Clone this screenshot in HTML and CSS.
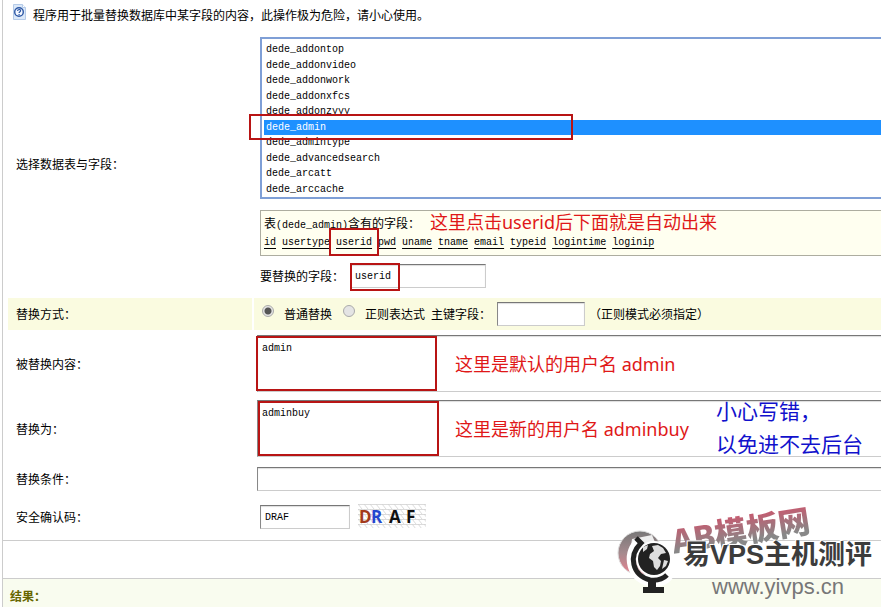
FILE: index.html
```
<!DOCTYPE html>
<html lang="zh-CN">
<head>
    <meta charset="UTF-8">
    <meta name="viewport" content="width=device-width, initial-scale=1.0">
    <title>数据库内容替换</title>
    <link rel="stylesheet" href="styles.css">
</head>
<body>

<div class="page">
    <form class="sheet">
        <div class="tip">
            <svg class="tip-icon" width="13" height="16" viewBox="0 0 13 16">
                <path d="M.5.5h9l3 3v12H.5z" fill="#dbe8f8" stroke="#b5cbe8"/>
                <path d="M9.500.5v3h3" fill="#fff" stroke="#b5cbe8"/>
                <circle cx="6" cy="8" r="4.300" fill="#f4f8ff" stroke="#2c57a5" stroke-width="1.400"/>
                <path d="M4.600 7c0-2 3-2 3-.2 0 1-1.500 1-1.500 2.200M6.100 10v1" fill="none" stroke="#2c57a5" stroke-width="1.200"/>
            </svg>
            <span>程序用于批量替换数据库中某字段的内容，此操作极为危险，请小心使用。</span>
        </div>

        <div class="row row-table">
            <label class="name" for="exptable">选择数据表与字段：</label>
            <div class="value">
                <select id="exptable" class="tables" size="10">
                    <option>dede_addonspec</option>
                    <option>dede_addontop</option>
                    <option>dede_addonvideo</option>
                    <option>dede_addonwork</option>
                    <option>dede_addonxfcs</option>
                    <option>dede_addonzyyy</option>
                    <option selected>dede_admin</option>
                    <option>dede_admintype</option>
                    <option>dede_advancedsearch</option>
                    <option>dede_arcatt</option>
                    <option>dede_arccache</option>
                </select>
                <div class="fields">
                    <p>表<code>(dede_admin)</code>含有的字段：</p>
                    <p class="links">
                        <a href="#">id</a>
                        <a href="#">usertype</a>
                        <a href="#">userid</a>
                        <a href="#">pwd</a>
                        <a href="#">uname</a>
                        <a href="#">tname</a>
                        <a href="#">email</a>
                        <a href="#">typeid</a>
                        <a href="#">logintime</a>
                        <a href="#">loginip</a>
                    </p>
                    <span class="mark mark-link"></span>
                    <span class="note note-link">这里点击userid后下面就是自动出来</span>
                </div>
                <div class="line">
                    <label class="field-label" for="rpfield">要替换的字段：</label>
                    <input type="text" id="rpfield" class="text-field" value="userid">
                    <span class="mark mark-field"></span>
                </div>
                <span class="mark mark-option"></span>
            </div>
        </div>

        <div class="row row-shaded">
            <span class="name">替换方式：</span>
            <div class="value modes">
                <input type="radio" id="mode1" name="rptype" checked>
                <label for="mode1">普通替换</label>
                <input type="radio" id="mode2" name="rptype">
                <label for="mode2">正则表达式</label>
                <label class="key-label" for="keyfield">主键字段：</label>
                <input type="text" id="keyfield" class="text-key">
                <span>（正则模式必须指定）</span>
            </div>
        </div>

        <div class="row">
            <label class="name" for="rpstring">被替换内容：</label>
            <div class="value value-area">
                <textarea id="rpstring">admin</textarea>
                <span class="mark mark-from"></span>
                <span class="note note-area">这里是默认的用户名 admin</span>
            </div>
        </div>

        <div class="row">
            <label class="name" for="tostring">替换为：</label>
            <div class="value value-area">
                <textarea id="tostring">adminbuy</textarea>
                <span class="mark mark-to"></span>
                <span class="note note-area">这里是新的用户名 adminbuy</span>
                <span class="note note-blue">小心写错，<br>以免进不去后台</span>
            </div>
        </div>

        <div class="row">
            <label class="name" for="condition">替换条件：</label>
            <div class="value value-input">
                <input type="text" id="condition" class="text-full">
            </div>
        </div>

        <div class="row">
            <label class="name" for="validate">安全确认码：</label>
            <div class="value value-code">
                <input type="text" id="validate" class="text-code" value="DRAF">
                <svg class="captcha" width="68" height="26" viewBox="0 0 68 26">
                    <defs>
                        <pattern id="mesh" width="6" height="5" patternUnits="userSpaceOnUse">
                            <path d="M0 .5h6M0 0l4 5" fill="none" stroke="#d2d2d2" stroke-width=".8"/>
                        </pattern>
                    </defs>
                    <rect width="68" height="24" fill="url(#mesh)"/>
                    <text x="1" y="19" fill="#a33a1c">D</text>
                    <text x="13" y="19" fill="#2447cf">R</text>
                    <text x="31" y="19" fill="#111">A</text>
                    <text x="48" y="19" fill="#111">F</text>
                </svg>
            </div>
        </div>
    </form>

    <div class="actions"></div>
    <div class="result">结果：</div>

    <div class="watermark">
        <svg class="badge" width="60" height="66" viewBox="0 0 60 66">
            <defs>
                <linearGradient id="disc" x1="0" y1="0" x2="0" y2="1">
                    <stop offset="0" stop-color="#777"/>
                    <stop offset=".5" stop-color="#a58a8e"/>
                    <stop offset="1" stop-color="#e8808e"/>
                </linearGradient>
            </defs>
            <circle cx="23" cy="24" r="22" fill="url(#disc)" stroke="#ddd"/>
            <path d="M15 10l20-4 5 12-16 10-11-4z" fill="#eee"/>
            <path d="M21 13C9 27 13 49 34 53c8 1 14-1 18-6" fill="none" stroke="#fff" stroke-width="9"/>
            <circle cx="37" cy="30" r="18" fill="#fff"/>
            <path d="M19 9l5 5C11 27 15 46 33 51c8 1 13-1 17-5" fill="none" stroke="#222" stroke-width="5"/>
            <circle cx="37" cy="30" r="16" fill="#222"/>
            <path d="M35 17l6-1 5 3 3 5-5 1-3 4 3 3-1 5-3 4-3-3-1-6-4-3 1-4 4-3zM26 18l5-2-1 4-4 3zM47 31l4 1-2 5-4 3z" fill="#ddd"/>
            <path d="M31 51h8v7h8v6H26v-6h5z" fill="#222"/>
        </svg>
        <span class="brand-back">AB模板网</span>
        <span class="brand">易VPS主机测评</span>
        <span class="site">www.yivps.cn</span>
    </div>
</div>

<script>
    // keep the selected table in the middle of the list
    document.getElementById('exptable').scrollTop = 13;
</script>
</body>
</html>
```
FILE: styles.css
```
* {
    box-sizing: border-box;
}

body {
    margin: 0;
    background-color: #fff;
    color: #000;
    font-family: "Noto Sans CJK SC", sans-serif;
    font-size: 12px;
    line-height: 20px;
}

p {
    margin: 0;
}

code, a, input, select, textarea {
    font-family: "Liberation Mono", monospace;
    font-size: 10px;
    color: #000;
}

code {
    line-height: 1;
}

.page {
    position: relative;
    min-height: 100vh;
    margin-left: 2px;
    border-left: 1px solid #ccc;
    overflow: hidden;
    display: flex;
    flex-direction: column;
}

/* the form runs past the right edge of the frame */
.sheet {
    width: calc(100% + 40px);
    padding: 0 0 4px 5px;
    display: flex;
    flex-direction: column;
    gap: 2px;
}

.tip {
    display: flex;
    align-items: flex-start;
    gap: 7px;
    height: 29px;
    padding: 4px 5px 0;
}

.tip span {
    padding-top: 1px;
}

.row {
    display: grid;
    grid-template-columns: 244px 1fr;
    gap: 2px;
}

.name {
    align-self: stretch;
    display: flex;
    align-items: center;
    padding-left: 8px;
}

.value {
    position: relative;
    padding: 6px;
}

.row-table .value {
    padding-bottom: 8px;
}

.row-shaded .name, .row-shaded .value {
    background-color: #fafbe0;
}

.tables {
    display: block;
    width: 100%;
    height: 162px;
    padding: 0 2px;
    border: 2px solid #7f9fd6;
    border-radius: 0;
    background-color: #fff;
    outline: none;
}

.tables option {
    min-height: 0;
    padding: 2px;
}

.tables option:nth-child(even) {
    padding-bottom: 3px;
}

.tables option:checked {
    background: #1e90ff linear-gradient(#1e90ff, #1e90ff);
    color: #fff;
}

.fields {
    position: relative;
    margin-top: 11px;
    padding: 2px 3px;
    border: 1px solid #adada0;
    background-color: #fffff0;
}

.links {
    display: flex;
    gap: 6px;
}

.links a {
    text-underline-offset: 3px;
}

input[type="text"], textarea {
    margin: 0;
    border: 1px solid #ccc;
    border-top-color: #777;
    border-left-color: #888;
    background-color: #fff;
    box-shadow: inset 0 1px 1px #ddd;
    outline: none;
}

input[type="text"] {
    height: 24px;
    padding: 0 4px;
}

.line {
    position: relative;
    display: flex;
    align-items: center;
    margin-top: 8px;
}

.field-label {
    width: 90px;
}

.text-field {
    width: 136px;
}

.modes {
    display: flex;
    align-items: center;
    height: 32px;
    padding: 0 8px;
}

.modes input[type="radio"] {
    width: 12px;
    height: 12px;
    margin: 0 10px 6px 0;
    appearance: none;
    border: 1px solid #aaa;
    border-radius: 50%;
    background-color: #e4e4e4;
}

.modes input[type="radio"]:checked {
    background: radial-gradient(circle, #555 0 3px, #e4e4e4 4px);
}

.modes label + input[type="radio"] {
    margin-left: 11px;
}

.key-label {
    margin-left: 6px;
}

.modes .text-key {
    width: 88px;
    margin: 0 4px 0 6px;
}

.value-area {
    padding: 3px;
}

textarea {
    display: block;
    width: 100%;
    height: 57px;
    padding: 5px 4px;
    line-height: 15px;
    resize: none;
}

.value-input {
    padding: 5px 3px;
}

.text-full {
    display: block;
    width: 100%;
}

.value-code {
    display: flex;
    align-items: center;
    gap: 8px;
    padding: 6px;
}

.text-code {
    width: 90px;
}

.captcha text {
    font-family: "Open Sans", sans-serif;
    font-size: 17px;
    font-weight: bold;
}

.actions {
    height: 38px;
    border-top: 1px solid #ccc;
}

.result {
    flex: 1;
    padding: 7px;
    border-top: 1px solid #ccc;
    background-color: #f9fcef;
    color: #666600;
    font-weight: bold;
}

/* red frames and hints over the form */
.mark {
    position: absolute;
    border: 2px solid #b81414;
    pointer-events: none;
}

.mark-option {
    left: -5px;
    top: 83px;
    width: 324px;
    height: 26px;
}

.mark-link {
    left: 68px;
    top: 17px;
    width: 50px;
    height: 28px;
}

.mark-field {
    left: 90px;
    top: -1px;
    width: 50px;
    height: 28px;
}

.mark-from {
    left: 2px;
    top: 4px;
    width: 181px;
    height: 55px;
}

.mark-to {
    left: 4px;
    top: 4px;
    width: 181px;
    height: 55px;
}

.note {
    position: absolute;
    color: #e01818;
    font-family: "Noto Sans", "Noto Sans CJK SC", sans-serif;
    font-size: 18px;
    line-height: 24px;
    white-space: nowrap;
    pointer-events: none;
}

.note-link {
    left: 169px;
    top: -1px;
}

.note-area {
    left: 201px;
    top: 20px;
}

.note-blue {
    left: 462px;
    top: -2px;
    color: #1111cc;
    font-size: 21px;
    line-height: 33px;
}

.watermark {
    position: absolute;
    right: 6px;
    top: 500px;
    width: 260px;
    height: 100px;
    white-space: nowrap;
    pointer-events: none;
}

.watermark span, .badge {
    position: absolute;
}

.badge {
    left: 2px;
    top: 29px;
}

.brand-back {
    left: 56px;
    top: 9px;
    background-image: linear-gradient(#d4506a, #888 80%);
    background-clip: text;
    -webkit-background-clip: text;
    color: transparent;
    font-size: 32px;
    line-height: 40px;
    font-weight: 900;
    transform: rotate(-9deg);
}

.brand {
    left: 68px;
    top: 35px;
    color: #3c3c3c;
    font-family: "Liberation Sans", "Noto Sans CJK SC", sans-serif;
    font-size: 27px;
    line-height: 40px;
    font-weight: bold;
    text-shadow: 0 0 2px #fff, 1px 1px 0 #fff, -1px -1px 0 #fff;
}

.site {
    left: 97px;
    top: 72px;
    color: #777;
    font-family: "Liberation Sans", sans-serif;
    font-size: 22px;
    line-height: 30px;
}
```
